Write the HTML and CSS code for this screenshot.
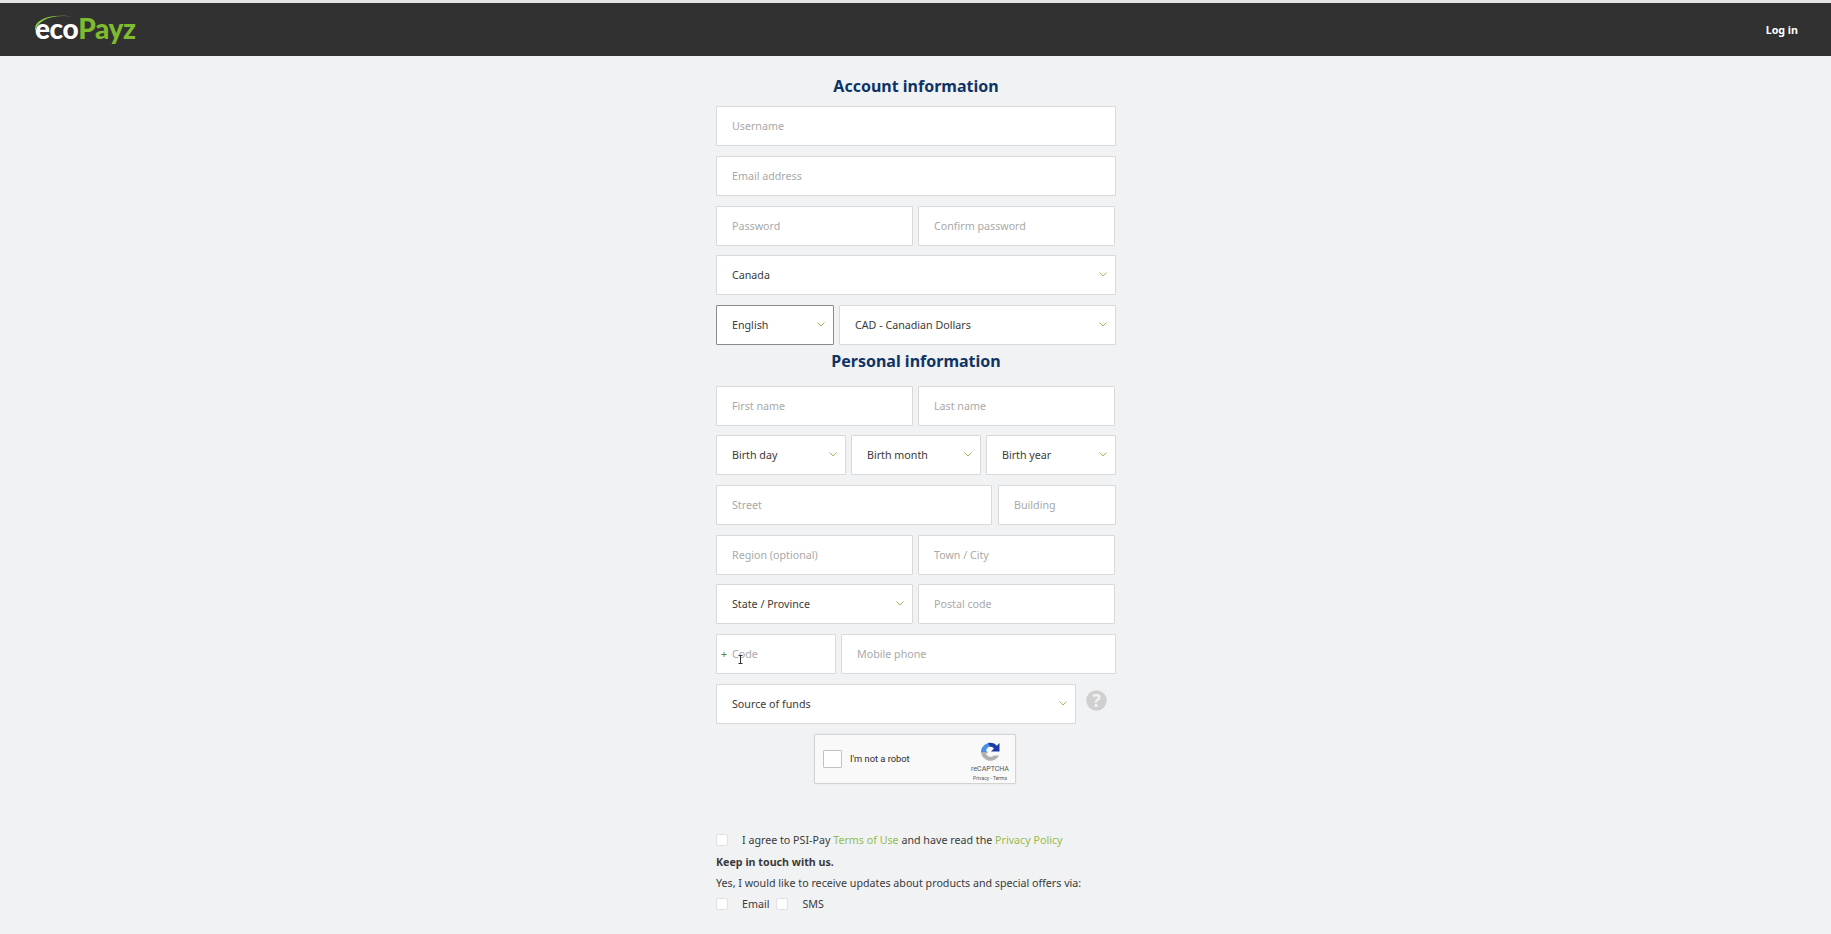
FILE: index.html
```html
<!DOCTYPE html>
<html lang="en">
<head>
<meta charset="utf-8">
<title>ecoPayz</title>
<link rel="stylesheet" href="styles.css">
</head>
<body>
<header class="topbar">
  <a class="logo" href="#">
    <svg class="logo-arc" width="44" height="20" viewBox="0 0 44 20"><path d="M2.500 19C-1 10 13 0 43 5 18 1 4 9 2.500 19Z" fill="#8dc63f"/></svg>
    <span class="logo-eco">eco</span><span class="logo-payz">Payz</span>
  </a>
  <a class="login" href="#">Log in</a>
</header>
<main class="form">
  <h2 class="title">Account information</h2>
  <div class="row"><input class="field grow" placeholder="Username"></div>
  <div class="row"><input class="field grow" placeholder="Email address"></div>
  <div class="row"><input class="field half" placeholder="Password"><input class="field half" placeholder="Confirm password"></div>
  <div class="row">
    <div class="sel grow"><select><option>Canada</option></select><svg class="chev" viewBox="0 0 8 5"><path d="M.5.5 4 4 7.500.5"/></svg></div>
  </div>
  <div class="row">
    <div class="sel lang"><select class="focus"><option>English</option></select><svg class="chev" viewBox="0 0 8 5"><path d="M.5.5 4 4 7.500.5"/></svg></div>
    <div class="sel grow"><select><option>CAD - Canadian Dollars</option></select><svg class="chev" viewBox="0 0 8 5"><path d="M.5.5 4 4 7.500.5"/></svg></div>
  </div>
  <h2 class="title title-2">Personal information</h2>
  <div class="row"><input class="field half" placeholder="First name"><input class="field half" placeholder="Last name"></div>
  <div class="row">
    <div class="sel third"><select><option>Birth day</option></select><svg class="chev" viewBox="0 0 8 5"><path d="M.5.5 4 4 7.500.5"/></svg></div>
    <div class="sel third"><select><option>Birth month</option></select><svg class="chev" viewBox="0 0 8 5"><path d="M.5.5 4 4 7.500.5"/></svg></div>
    <div class="sel third"><select><option>Birth year</option></select><svg class="chev" viewBox="0 0 8 5"><path d="M.5.5 4 4 7.500.5"/></svg></div>
  </div>
  <div class="row"><input class="field street" placeholder="Street"><input class="field building" placeholder="Building"></div>
  <div class="row"><input class="field half" placeholder="Region (optional)"><input class="field half" placeholder="Town / City"></div>
  <div class="row">
    <div class="sel half"><select><option>State / Province</option></select><svg class="chev" viewBox="0 0 8 5"><path d="M.5.5 4 4 7.500.5"/></svg></div>
    <input class="field half" placeholder="Postal code">
  </div>
  <div class="row">
    <div class="code">
      <span class="plus">+</span><input class="field grow" placeholder="Code">
      <svg class="ibeam" width="5" height="9" viewBox="0 0 5 9"><path d="M.5.5h4M2.500.5v8M.5 8.500h4"/></svg>
    </div>
    <input class="field grow" placeholder="Mobile phone">
  </div>
  <div class="row row-funds">
    <div class="sel funds"><select><option>Source of funds</option></select><svg class="chev" viewBox="0 0 8 5"><path d="M.5.5 4 4 7.500.5"/></svg></div>
    <svg class="help" width="21" height="21" viewBox="0 0 21 21"><circle cx="10.500" cy="10.500" r="10.200" fill="#cfcfcf"/><text x="10.500" y="16.500" text-anchor="middle" class="help-q">?</text></svg>
  </div>
  <div class="captcha">
    <span class="captcha-box"></span>
    <span class="captcha-label">I'm not a robot</span>
    <div class="captcha-brand">
      <svg class="captcha-logo" width="20" height="20" viewBox="0 0 20 20">
        <path d="M1 9A9 9 0 0 1 11 1L13 5A5 5 0 0 0 6 8.500L8 10.500H1Z" fill="#4a90e2"/>
        <path d="M8 1C12 .3 15 1.500 16.800 3.700L19.500 1V9.500H11L14 6.500C13 5.300 11.500 4.500 10 4.500Z" fill="#1c3aa9"/>
        <path d="M1 10H8L6 12A5 5 0 0 0 14 13.500H19A9.500 9.500 0 0 1 1 10Z" fill="#b0b0b0"/>
      </svg>
      <span class="captcha-name">reCAPTCHA</span>
      <span class="captcha-links">Privacy - Terms</span>
    </div>
  </div>
  <label class="check check-terms"><span class="box"></span><span class="check-text">I agree to PSI-Pay <a href="#">Terms of Use</a> and have read the <a href="#">Privacy Policy</a></span></label>
  <p class="keep">Keep in touch with us.</p>
  <p class="yes">Yes, I would like to receive updates about products and special offers via:</p>
  <div class="channels">
    <label class="check"><span class="box"></span><span class="check-text">Email</span></label>
    <label class="check"><span class="box"></span><span class="check-text">SMS</span></label>
  </div>
</main>
</body>
</html>
```
FILE: styles.css
```css
* { box-sizing: border-box; }
html, body { margin: 0; height: 100%; }
body {
  background: #f1f2f4;
  font-family: "Noto Sans", sans-serif;
  font-size: 10.7px;
  color: #3a3a3a;
  overflow: hidden;
  border-top: 3px solid #e4e4e4;
}
.topbar {
  height: 53px;
  background: #313131;
  display: flex;
  align-items: center;
  justify-content: space-between;
  padding: 0 33px;
}
.logo {
  position: relative;
  display: flex;
  align-items: baseline;
  text-decoration: none;
  font-family: Lato, sans-serif;
  font-weight: 900;
  font-size: 28px;
  line-height: 32px;
  letter-spacing: -0.4px;
  margin-top: -3px;
}
.logo-arc { position: absolute; left: 0; top: 0; }
.logo-eco { color: #fff; margin-left: 2px; }
.logo-payz { color: #7fbb2e; }
.login {
  color: #fff;
  font-weight: 700;
  font-size: 10.7px;
  text-decoration: none;
}
.form { width: 400px; margin-left: 716px; }
.title {
  margin: 0;
  height: 50.300px;
  line-height: 21px;
  padding-top: 20px;
  text-align: center;
  font-size: 16px;
  font-weight: 700;
  color: #0f3464;
}
.title-2 { height: 40.500px; padding-top: 6px; margin-top: 0; }
.row {
  display: flex;
  gap: 5px;
  height: 40px;
  margin-bottom: 9.700px;
}
.row:has(+ .title) { margin-bottom: 0; }
.field, .sel select {
  height: 40px;
  background: #fff;
  border: 1px solid #d9d9d9;
  border-radius: 1px;
  font: inherit;
  color: #3a3a3a;
  outline: none;
}
.field { padding: 0 10px 0 15px; min-width: 0; }
.field::placeholder { color: #a9a9a9; opacity: 1; }
.grow { flex: 1 1 0; min-width: 0; }
.half { width: 197px; flex: none; }
.street { width: 276px; flex: none; }
.building { width: 118px; flex: none; margin-left: 1px; }
.lang { width: 118px; flex: none; }
.third { flex: 1 1 0; }
.funds { width: 360px; flex: none; }
.code { position: relative; width: 120px; flex: none; display: flex; }
.plus {
  position: absolute;
  left: 5px;
  top: 12px;
  color: #6d7d20;
  line-height: 16px;
}
.ibeam {
  position: absolute;
  left: 22px;
  top: 21px;
  fill: none;
  stroke: #333;
  stroke-width: 1;
}
.sel { position: relative; }
.sel select {
  width: 100%;
  appearance: none;
  padding: 0 24px 0 15px;
}
.sel select.focus { border-color: #8a8a8a; }
.chev {
  position: absolute;
  right: 9px;
  top: 17px;
  width: 8px;
  height: 5px;
  fill: none;
  stroke: #9bbf55;
  stroke-width: 1;
  pointer-events: none;
}
.row-funds { align-items: flex-start; margin-bottom: 10px; }
.help { margin: 6px 0 0 4.500px; }
.help-q { font-family: "Noto Sans", sans-serif; font-size: 18px; font-weight: 700; fill: #f1f2f4; }
.captcha {
  position: relative;
  display: flex;
  align-items: center;
  width: 202px;
  height: 50px;
  margin-left: 98px;
  background: #f9f9f9;
  border: 1px solid #d3d3d3;
  border-radius: 1px;
  box-shadow: 0 0 2px rgba(0,0,0,.08);
  font-family: Roboto, sans-serif;
}
.captcha-box {
  width: 19px;
  height: 18px;
  margin-left: 8px;
  background: #fff;
  border: 1px solid #c1c1c1;
  border-radius: 1px;
}
.captcha-label { margin-left: 8px; font-size: 9.300px; color: #2a2a2a; }
.captcha-brand {
  position: absolute;
  top: 7px;
  right: 5px;
  width: 40px;
  display: flex;
  flex-direction: column;
  align-items: center;
  color: #555;
}
.captcha-name { font-size: 7px; line-height: 9px; margin-top: 3px; }
.captcha-links { font-size: 5px; line-height: 8px; }
.check { display: inline-flex; align-items: center; gap: 14px; }
.box {
  width: 12px;
  height: 12px;
  background: #fff;
  border: 1px solid #e2e2e2;
  border-radius: 2px;
  flex: none;
}
.check-terms { display: flex; margin-top: 44px; height: 24px; }
.check-text a { color: #95bc4e; text-decoration: none; }
.keep { margin: 0; font-weight: 700; line-height: 21px; height: 21px; }
.yes { margin: 0; line-height: 21px; }
.channels { display: flex; gap: 7px; height: 21px; align-items: center; }
```
